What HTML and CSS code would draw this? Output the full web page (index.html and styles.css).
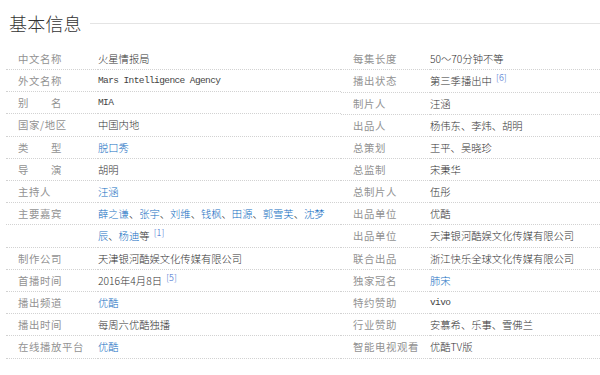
FILE: index.html
```html
<!DOCTYPE html>
<html lang="zh-CN">
<head>
<meta charset="utf-8">
<title>基本信息</title>
<link rel="stylesheet" href="styles.css">
</head>
<body>
<div class="basic-info">
  <div class="title-row">
    <h2 class="title">基本信息</h2>
    <span class="title-line"></span>
  </div>
  <div class="info-cols">
    <dl class="info-col info-left">
      <dt>中文名称</dt><dd>火星情报局</dd>
      <dt>外文名称</dt><dd class="mono">Mars Intelligence Agency</dd>
      <dt>别&emsp;&emsp;名</dt><dd class="mono">MIA</dd>
      <dt>国家/地区</dt><dd>中国内地</dd>
      <dt>类&emsp;&emsp;型</dt><dd><a href="#">脱口秀</a></dd>
      <dt>导&emsp;&emsp;演</dt><dd>胡明</dd>
      <dt>主持人</dt><dd><a href="#">汪涵</a></dd>
      <dt class="tall">主要嘉宾</dt><dd class="tall"><a href="#">薛之谦</a>、<a href="#">张宇</a>、<a href="#">刘维</a>、<a href="#">钱枫</a>、<a href="#">田源</a>、<a href="#">郭雪芙</a>、<a href="#">沈梦辰</a>、<a href="#">杨迪</a>等 <sup class="ref">[1]</sup></dd>
      <dt>制作公司</dt><dd>天津银河酷娱文化传媒有限公司</dd>
      <dt>首播时间</dt><dd>2016年4月8日 <sup class="ref">[5]</sup></dd>
      <dt>播出频道</dt><dd><a href="#">优酷</a></dd>
      <dt>播出时间</dt><dd>每周六优酷独播</dd>
      <dt>在线播放平台</dt><dd><a href="#">优酷</a></dd>
    </dl>
    <dl class="info-col info-right">
      <dt>每集长度</dt><dd>50～70分钟不等</dd>
      <dt>播出状态</dt><dd>第三季播出中 <sup class="ref">[6]</sup></dd>
      <dt>制片人</dt><dd>汪涵</dd>
      <dt>出品人</dt><dd>杨伟东、李炜、胡明</dd>
      <dt>总策划</dt><dd>王平、吴晓珍</dd>
      <dt>总监制</dt><dd>宋秉华</dd>
      <dt>总制片人</dt><dd>伍彤</dd>
      <dt>出品单位</dt><dd>优酷</dd>
      <dt>出品单位</dt><dd>天津银河酷娱文化传媒有限公司</dd>
      <dt>联合出品</dt><dd>浙江快乐全球文化传媒有限公司</dd>
      <dt>独家冠名</dt><dd><a href="#">肺宋</a></dd>
      <dt>特约赞助</dt><dd class="mono">vivo</dd>
      <dt>行业赞助</dt><dd>安慕希、乐事、雪佛兰</dd>
      <dt>智能电视观看</dt><dd>优酷TV版</dd>
    </dl>
  </div>
</div>
</body>
</html>
```
FILE: styles.css
```css
html, body {
  margin: 0;
  padding: 0;
  background: #fff;
}

body {
  font-family: "Noto Sans CJK SC", "Noto Sans", sans-serif;
  color: #333;
  width: 600px;
  height: 375px;
  overflow: hidden;
}

.basic-info {
  padding: 12px 0 0 6px;
}

.title-row {
  display: flex;
  align-items: center;
  height: 22px;
  margin-bottom: 14.2px;
}

.title {
  margin: 0 0 0 3px;
  font-size: 18px;
  font-weight: 300;
  line-height: 22px;
  color: #333;
  letter-spacing: 0.2px;
}

.title-line {
  flex: 1;
  margin-left: 8px;
  border-top: 1px solid #e4e4e4;
}

.info-cols {
  display: flex;
}

.info-col {
  margin: 0;
  display: grid;
  grid-auto-rows: minmax(22.1px, auto);
}

.info-left {
  width: 335px;
  grid-template-columns: 92px 243px;
}

.info-right {
  flex: 1;
  grid-template-columns: 89px 1fr;
}

.info-col dt,
.info-col dd {
  margin: 0;
  box-sizing: border-box;
  line-height: 21.1px;
  border-bottom: 1px dotted #d2d2d2;
}

.info-col dt {
  padding-left: 12px;
  font-size: 10.4px;
  letter-spacing: 0.6px;
  color: #929292;
  white-space: nowrap;
}

.info-col dd {
  font-size: 10.3px;
  font-weight: 300;
  color: #333;
}

.info-left dd {
  padding-right: 11px;
}

.info-col .tall {
  background-image: linear-gradient(to right, #d2d2d2 1px, transparent 1px);
  background-size: 2px 1px;
  background-repeat: repeat-x;
  background-position: 0 21px;
}

.info-col dd.tall {
  line-height: 22.1px;
}

.mono {
  font-family: "Liberation Mono", "DejaVu Sans Mono", monospace;
}

.info-col dd.mono {
  font-size: 9.5px;
  font-weight: normal;
  letter-spacing: -0.6px;
  color: #444;
}

a {
  color: #136ec2;
  text-decoration: none;
}

.ref {
  font-size: 9px;
  color: #3366cc;
  vertical-align: baseline;
  position: relative;
  top: -4px;
  line-height: 0;
  margin-left: 2px;
}
```
